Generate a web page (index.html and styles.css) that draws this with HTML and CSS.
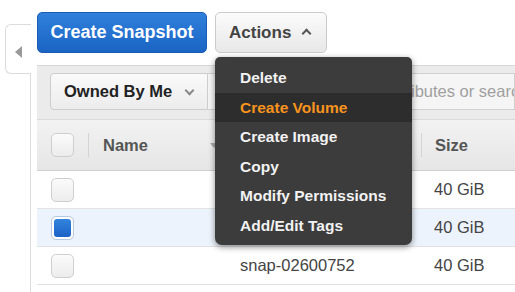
FILE: index.html
```html
<!DOCTYPE html>
<html lang="en">
  <head>
    <meta charset="UTF-8" />
    <title>Snapshots</title>
    <link rel="stylesheet" href="styles.css">
  </head>
  <body>
    <div class="page">
      <div class="sidebar">
        <div class="side-tab"><span class="tab-arrow"></span></div>
        <div class="side-rail"></div>
      </div>

      <div class="content">
        <div class="toolbar">
          <button class="btn btn-primary">Create Snapshot</button>
          <div class="actions">
            <button class="btn btn-default">Actions <span class="caret-up"></span></button>
            <ul class="action-menu">
              <li>Delete</li>
              <li class="active">Create Volume</li>
              <li>Create Image</li>
              <li>Copy</li>
              <li>Modify Permissions</li>
              <li>Add/Edit Tags</li>
            </ul>
          </div>
        </div>

        <div class="filter-bar">
          <button class="owner-select">Owned By Me <span class="caret-down"></span></button>
          <div class="search-box">Filter by tags and attributes or search by keyword</div>
        </div>

        <div class="grid">
          <div class="row head">
            <div class="cell check"><span class="box"></span></div>
            <div class="cell name">Name <span class="sort"></span></div>
            <div class="cell snap"></div>
            <div class="cell size">Size</div>
          </div>
          <div class="row">
            <div class="cell check"><span class="box"></span></div>
            <div class="cell name"></div>
            <div class="cell snap"></div>
            <div class="cell size">40 GiB</div>
          </div>
          <div class="row selected">
            <div class="cell check"><span class="box checked"></span></div>
            <div class="cell name"></div>
            <div class="cell snap"></div>
            <div class="cell size">40 GiB</div>
          </div>
          <div class="row">
            <div class="cell check"><span class="box"></span></div>
            <div class="cell name"></div>
            <div class="cell snap">snap-02600752</div>
            <div class="cell size">40 GiB</div>
          </div>
          <div class="row">
            <div class="cell check"><span class="box"></span></div>
            <div class="cell name"></div>
            <div class="cell snap">snap-099a0050</div>
            <div class="cell size">40 GiB</div>
          </div>
        </div>
      </div>
    </div>
  </body>
</html>
```

FILE: styles.css
```css
/* Page frame */
body {
  margin: 0;
  width: 515px;
  height: 292px;
  overflow: hidden;
  background: #fff;
  font-family: "Liberation Sans", Arial, sans-serif;
  color: #333;
}

.page {
  display: flex;
  height: 292px;
  overflow: hidden;
}

/* Collapsed side navigation */
.sidebar {
  width: 31px;
  display: flex;
  flex-direction: column;
  flex-shrink: 0;
}

.side-tab {
  margin: 24px 0 0 5px;
  height: 48px;
  border: 1px solid #dcdcdc;
  border-right: none;
  border-radius: 6px 0 0 6px;
  display: flex;
  align-items: center;
  padding-left: 9px;
}

.tab-arrow {
  width: 0;
  height: 0;
  border-top: 6px solid transparent;
  border-bottom: 6px solid transparent;
  border-right: 7px solid #9a9a9a;
  margin-top: 5px;
}

.side-rail {
  flex: 1;
  border-right: 1px solid #dcdcdc;
}

.content {
  flex: 1;
  margin-left: 6px;
  min-width: 0;
}

/* Top buttons */
.toolbar {
  display: flex;
  gap: 8px;
  padding-top: 12px;
  height: 41px;
  margin-bottom: 12px;
}

.btn {
  height: 41px;
  border-radius: 5px;
  font-family: inherit;
  font-weight: bold;
  padding: 0;
  white-space: nowrap;
  cursor: pointer;
}

.btn-primary {
  width: 170px;
  font-size: 18px;
  color: #fff;
  background: linear-gradient(#2f80db, #1b64c4);
  border: 1px solid #1a5cb3;
}

.actions {
  position: relative;
}

.btn-default {
  width: 112px;
  font-size: 17px;
  color: #444;
  background: linear-gradient(#fbfbfb, #e8e8e8);
  border: 1px solid #cbcbcb;
  text-align: left;
  padding-left: 13px;
}

.caret-up {
  display: inline-block;
  width: 5px;
  height: 5px;
  border-left: 2px solid #555;
  border-top: 2px solid #555;
  transform: rotate(45deg);
  margin: 0 0 0 7px;
  vertical-align: middle;
}

/* Actions dropdown */
.action-menu {
  position: absolute;
  top: 45px;
  left: 0;
  width: 197px;
  margin: 0;
  padding: 6px 0 5px;
  list-style: none;
  background: #3c3c3c;
  border-radius: 5px 5px 7px 7px;
  box-shadow: 0 2px 6px rgba(0, 0, 0, 0.45);
  z-index: 5;
}

.action-menu li {
  height: 29.5px;
  line-height: 29.5px;
  padding-left: 25px;
  font-size: 15.5px;
  font-weight: bold;
  color: #f2f2f2;
}

.action-menu li.active {
  background: #2d2d2d;
  color: #f7941d;
}

/* Filter row */
.filter-bar {
  display: flex;
  border-top: 1px solid #d8d8d8;
  background: #ebebeb;
  height: 54px;
  padding: 7px 0 0 13px;
  box-sizing: border-box;
}

.owner-select {
  width: 158px;
  height: 37px;
  padding: 0 0 0 13px;
  text-align: left;
  white-space: nowrap;
  font-family: inherit;
  font-size: 16.5px;
  font-weight: bold;
  color: #222;
  background: linear-gradient(#fafafa, #ececec);
  border: 1px solid #cdcdcd;
  border-radius: 4px 0 0 4px;
}

.caret-down {
  display: inline-block;
  width: 5px;
  height: 5px;
  border-right: 2px solid #8a8a8a;
  border-bottom: 2px solid #8a8a8a;
  transform: rotate(45deg);
  margin: 0 0 5px 9px;
  vertical-align: middle;
}

.search-box {
  flex: 1;
  height: 37px;
  box-sizing: border-box;
  border: 1px solid #d0d0d0;
  border-left: none;
  background: #f5f5f5;
  padding-left: 48px;
  line-height: 35px;
  font-size: 16.5px;
  color: #a0a0a0;
  white-space: nowrap;
  overflow: hidden;
}

/* Snapshot table */
.row {
  display: flex;
  height: 37px;
  border-bottom: 1px solid #e2e2e2;
  align-items: center;
  font-size: 16.5px;
  color: #444;
}

.row.head {
  height: 50px;
  border-top: 1px solid #dadada;
  border-bottom: 1px solid #cfcfcf;
  background: linear-gradient(#f2f2f2, #e6e6e6);
  font-weight: bold;
  color: #555;
}

.row.selected {
  background: #edf3fc;
}

.cell {
  padding-left: 14px;
  box-sizing: border-box;
  white-space: nowrap;
}

.cell.check {
  width: 51px;
  padding-left: 14px;
}

.cell.name {
  width: 138px;
  display: flex;
  align-items: center;
}

.cell.snap {
  width: 195px;
}

.cell.size {
  flex: 1;
  padding-left: 13px;
}

.head .cell.name,
.head .cell.snap,
.head .cell.size {
  border-left: 1px solid #d4d4d4;
  height: 24px;
  line-height: 24px;
}

.sort {
  margin-left: auto;
  margin-right: 8px;
  width: 0;
  height: 0;
  border-left: 4px solid transparent;
  border-right: 4px solid transparent;
  border-top: 5px solid #aaa;
}

.box {
  display: block;
  width: 23px;
  height: 24px;
  box-sizing: border-box;
  border: 1px solid #cfcfcf;
  border-radius: 5px;
  background: linear-gradient(#fbfbfb, #ececec);
}

.box.checked {
  border: 1px solid #b9c9e0;
  background: #fff;
  padding: 2px;
}

.box.checked::after {
  content: "";
  display: block;
  height: 100%;
  border-radius: 3px;
  background: linear-gradient(#3384de, #1b63c6);
}
```
